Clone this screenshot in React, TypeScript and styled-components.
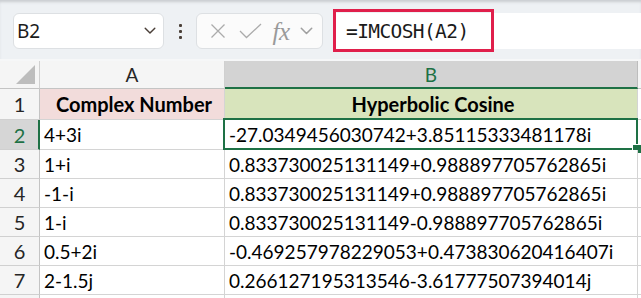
import React from 'react';
import styled, { createGlobalStyle, css } from 'styled-components';

const GlobalStyle = createGlobalStyle`
  html, body {
    margin: 0;
    padding: 0;
    background: #ffffff;
    overflow: hidden;
  }
  * {
    box-sizing: border-box;
  }
`;

const Page = styled.div`
  width: 641px;
  height: 298px;
  overflow: hidden;
  background: #ffffff;
`;

const Toolbar = styled.div`
  height: 61px;
  display: flex;
  align-items: flex-start;
  padding: 13px 0 0 13px;
  background: #eef1f4;
  border-bottom: 2px solid #f6f7f8;
  box-shadow: inset 0 3px 3px -1px #c9ccd0;
`;

const NameBox = styled.div`
  width: 151px;
  height: 36px;
  display: flex;
  align-items: center;
  justify-content: space-between;
  padding: 0 7px 0 3px;
  background: #ffffff;
  border: 1px solid #dde0e3;
  border-radius: 6px;
  font-family: 'Noto Sans', sans-serif;
  font-size: 19px;
  color: #1b1b1b;
`;

const Dots = styled.div`
  width: 32px;
  height: 36px;
  display: flex;
  flex-direction: column;
  align-items: center;
  justify-content: center;
  gap: 3px;

  span {
    width: 3px;
    height: 3px;
    border-radius: 1px;
    background: #4a3f38;
  }
`;

const FxBox = styled.div`
  width: 127px;
  height: 36px;
  display: flex;
  align-items: center;
  padding: 0 4px 0 6px;
  background: #fbfbfb;
  border: 1px solid #dde0e3;
  border-radius: 6px;
`;

const IconSlot = styled.div<{ $w: number }>`
  width: ${(p) => p.$w}px;
  height: 36px;
  display: flex;
  align-items: center;
  justify-content: center;
`;

const FxText = styled.span`
  font-family: 'Liberation Serif', serif;
  font-style: italic;
  font-size: 25px;
  line-height: 1;
  color: #9a9a9a;
  letter-spacing: -0.5px;
`;

const FormulaInput = styled.div`
  position: relative;
  flex: 1;
  height: 36px;
  margin-left: 10px;
  display: flex;
  align-items: center;
  padding-left: 13px;
  background: #ffffff;
  font-family: 'DejaVu Sans Mono', monospace;
  font-size: 19.5px;
  color: #1b1b1b;
  letter-spacing: -0.6px;
`;

const Highlight = styled.div`
  position: absolute;
  left: 0;
  top: -4px;
  width: 161px;
  height: 43px;
  border: 3px solid #e01f4b;
`;

const Sheet = styled.div`
  display: flex;
  flex-direction: column;
`;

const Row = styled.div<{ $h: number }>`
  display: grid;
  grid-template-columns: 40px 185px 413px 1fr;
  height: ${(p) => p.$h}px;
`;

const Corner = styled.div`
  position: relative;
  background: #f5f5f5;
  border-right: 1px solid #d0d0d0;
  border-bottom: 1px solid #c4c4c4;

  &::after {
    content: '';
    position: absolute;
    right: 4px;
    bottom: 4px;
    width: 0;
    height: 0;
    border-left: 19px solid transparent;
    border-bottom: 19px solid #bdbdbd;
  }
`;

const ColHead = styled.div<{ $sel?: boolean }>`
  display: flex;
  align-items: center;
  justify-content: center;
  font-family: Lato, sans-serif;
  font-size: 19px;
  color: #262626;
  background: #f5f5f5;
  border-right: 1px solid #d0d0d0;
  border-bottom: 1px solid #c4c4c4;
  ${(p) =>
    p.$sel &&
    css`
      background: #d3d3d3;
      color: #1e7145;
      border-right-color: #bdbdbd;
      border-bottom: 2px solid #1e7145;
    `}
`;

const RowHead = styled.div<{ $sel?: boolean }>`
  display: flex;
  align-items: center;
  justify-content: center;
  font-family: Lato, sans-serif;
  font-size: 20px;
  color: #262626;
  background: #f5f5f5;
  border-right: 1px solid #c4c4c4;
  border-bottom: 1px solid #d0d0d0;
  ${(p) =>
    p.$sel &&
    css`
      background: #d6d6d6;
      color: #1e7145;
      border-right: 2px solid #1e7145;
      padding-left: 1px;
    `}
`;

const Cell = styled.div<{ $bg?: string; $bold?: boolean; $sel?: boolean }>`
  position: relative;
  display: flex;
  align-items: center;
  justify-content: ${(p) => (p.$bold ? 'center' : 'flex-start')};
  padding-left: 4px;
  font-family: Lato, sans-serif;
  font-size: ${(p) => (p.$bold ? 20 : 19)}px;
  font-weight: ${(p) => (p.$bold ? 700 : 400)};
  color: #000000;
  white-space: nowrap;
  background: ${(p) => p.$bg || '#ffffff'};
  border-right: 1px solid #d4d4d4;
  border-bottom: 1px solid #d4d4d4;

  ${(p) =>
    p.$sel &&
    css`
      &::before {
        content: '';
        position: absolute;
        left: -2px;
        top: -2px;
        right: -1px;
        bottom: -1px;
        border: 2px solid #1e7145;
      }
      &::after {
        content: '';
        position: absolute;
        right: -5px;
        bottom: -5px;
        width: 8px;
        height: 8px;
        background: #1e7145;
        border: 1px solid #ffffff;
      }
    `}
`;

const Edge = styled.div<{ $head?: boolean }>`
  background: ${(p) => (p.$head ? '#f5f5f5' : '#ffffff')};
  border-bottom: 1px solid ${(p) => (p.$head ? '#c4c4c4' : '#d4d4d4')};
`;

const Chevron = ({ color, size }: { color: string; size: number }) => (
  <svg width={size} height={size * 0.6} viewBox="0 0 10 6" fill="none">
    <path d="M1 1l4 4 4-4" stroke={color} strokeWidth="1.2" strokeLinecap="round" strokeLinejoin="round" />
  </svg>
);

const rows = [
  { n: 2, a: '4+3i', b: '-27.0349456030742+3.85115333481178i', h: 30 },
  { n: 3, a: '1+i', b: '0.833730025131149+0.988897705762865i', h: 29 },
  { n: 4, a: '-1-i', b: '0.833730025131149+0.988897705762865i', h: 29 },
  { n: 5, a: '1-i', b: '0.833730025131149-0.988897705762865i', h: 29 },
  { n: 6, a: '0.5+2i', b: '-0.469257978229053+0.473830620416407i', h: 29 },
  { n: 7, a: '2-1.5j', b: '0.266127195313546-3.61777507394014j', h: 29 },
];

export default function App() {
  return (
    <Page>
      <GlobalStyle />
      <Toolbar>
        <NameBox>
          <span>B2</span>
          <Chevron color="#4a3f38" size={12} />
        </NameBox>
        <Dots>
          <span />
          <span />
          <span />
        </Dots>
        <FxBox>
          <IconSlot $w={30}>
            <svg width="16" height="16" viewBox="0 0 16 16">
              <path d="M1.5 1.5l13 13M14.5 1.5l-13 13" stroke="#ababab" strokeWidth="1.3" />
            </svg>
          </IconSlot>
          <IconSlot $w={34}>
            <svg width="23" height="16" viewBox="0 0 23 16">
              <path d="M1 8l6.5 6.5L22 1" stroke="#ababab" strokeWidth="1.3" fill="none" />
            </svg>
          </IconSlot>
          <IconSlot $w={28}>
            <FxText>fx</FxText>
          </IconSlot>
          <IconSlot $w={22}>
            <Chevron color="#a0a0a0" size={13} />
          </IconSlot>
        </FxBox>
        <FormulaInput>
          =IMCOSH(A2)
          <Highlight />
        </FormulaInput>
      </Toolbar>
      <Sheet>
        <Row $h={28}>
          <Corner />
          <ColHead>A</ColHead>
          <ColHead $sel>B</ColHead>
          <Edge $head />
        </Row>
        <Row $h={31}>
          <RowHead>1</RowHead>
          <Cell $bg="#f2dcdb" $bold>Complex Number</Cell>
          <Cell $bg="#d8e4bc" $bold>Hyperbolic Cosine</Cell>
          <Edge />
        </Row>
        {rows.map((r) => (
          <Row key={r.n} $h={r.h}>
            <RowHead $sel={r.n === 2}>{r.n}</RowHead>
            <Cell>{r.a}</Cell>
            <Cell $sel={r.n === 2}>{r.b}</Cell>
            <Edge />
          </Row>
        ))}
        <Row $h={10}>
          <RowHead />
          <Cell />
          <Cell />
          <Edge />
        </Row>
      </Sheet>
    </Page>
  );
}
